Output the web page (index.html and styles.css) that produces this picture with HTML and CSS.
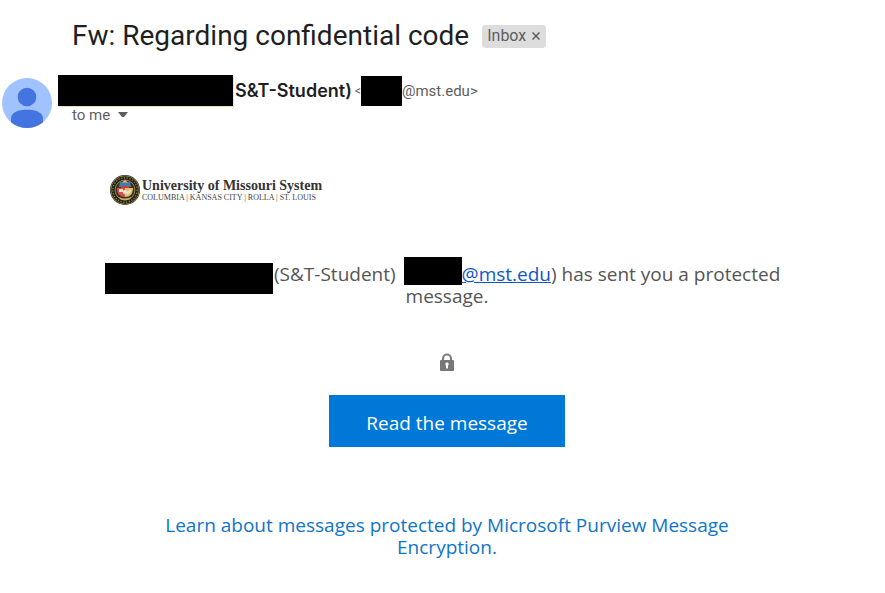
FILE: index.html
```html
<!DOCTYPE html>
<html lang="en">
<head>
    <meta charset="UTF-8">
    <meta name="viewport" content="width=device-width, initial-scale=1.0">
    <title>Fw: Regarding confidential code</title>
    <link rel="stylesheet" href="styles.css">
</head>
<body>
    <header class="subject">
        <h1>Fw: Regarding confidential code</h1>
        <div class="label">
            <span>Inbox</span>
            <button class="label-remove" type="button" aria-label="Remove label Inbox">
                <svg width="8" height="8" viewBox="0 0 8 8"><path d="M0.5 0.5L7.5 7.5M7.5 0.5L0.5 7.5" stroke="#5e5e5e" stroke-width="1.5"/></svg>
            </button>
        </div>
    </header>

    <section class="sender">
        <svg class="avatar" width="50" height="50" viewBox="0 0 50 50">
            <circle cx="25" cy="25" r="25" fill="#a0c3ff"/>
            <circle cx="25" cy="19" r="9.3" fill="#4374e0"/>
            <path d="M9 44.2V41C9 34 16.5 31.8 25 31.8S41 34 41 41V44.2A25 25 0 0 1 9 44.2Z" fill="#4374e0"/>
        </svg>
        <div class="sender-info">
            <div class="from">
                <span class="redacted redacted-name"></span>
                <span class="name">S&amp;T-Student)</span>
                <span class="address bracket">&lt;</span>
                <span class="redacted redacted-user"></span>
                <span class="address">@mst.edu&gt;</span>
            </div>
            <div class="to">
                <span>to me</span>
                <button class="details" type="button" aria-label="Show details">
                    <svg width="10" height="6" viewBox="0 0 10 6"><path d="M0 0H10L6 5H4Z" fill="#5e5e5e"/></svg>
                </button>
            </div>
        </div>
    </section>

    <main class="message">
        <div class="logo">
            <svg class="seal" width="32" height="32" viewBox="0 0 32 32">
                <circle cx="16" cy="16" r="15" fill="#24211b"/>
                <circle cx="16" cy="16" r="14.2" fill="none" stroke="#8b7840" stroke-width="1"/>
                <circle cx="16" cy="16" r="12.2" fill="none" stroke="#9c8a55" stroke-width="1.2" stroke-dasharray="1.2 1.6"/>
                <circle cx="16" cy="16" r="10" fill="#3b3422" stroke="#b39b50" stroke-width="0.8"/>
                <path d="M11 8H21L22 13H10Z" fill="#4a78b0"/>
                <path d="M13 8.5L16 6L19 8.5Z" fill="#d6c27c"/>
                <path d="M12 12H20V14H12Z" fill="#c8452f"/>
                <path d="M8 14H16V23C11 23 8 20 8 14Z" fill="#d8504a"/>
                <path d="M16 14H24C24 20 21 23 16 23Z" fill="#e0c060"/>
                <path d="M10 15H14V18H10ZM18 18L22 15V18L18 21Z" fill="#eee2c0"/>
                <circle cx="16" cy="18" r="2.2" fill="#e8e4dc"/>
                <path d="M10 23Q16 26 22 23L21 25Q16 27.5 11 25Z" fill="#c6b269"/>
            </svg>
            <div class="logo-text">
                <div class="logo-title">University of Missouri System</div>
                <div class="logo-campuses">COLUMBIA | KANSAS CITY | ROLLA | ST. LOUIS</div>
            </div>
        </div>

        <p class="notice">
            <span class="notice-line"><span class="redacted redacted-full"></span><span>(S&amp;T-Student)</span><span class="redacted redacted-mail"></span><span><a href="mailto:@mst.edu">@mst.edu</a>) has sent you a protected</span></span>
            <span class="notice-line notice-end">message.</span>
        </p>

        <svg class="lock" width="16" height="18" viewBox="0 0 16 18">
            <path d="M4 8V5.5A4 4 0 0 1 12 5.5V8" fill="none" stroke="#808080" stroke-width="2.2"/>
            <rect x="1" y="7" width="14" height="11" rx="1" fill="#787878"/>
            <path d="M8 9.5A1.7 1.7 0 0 1 9 12.6V15.5H7V12.6A1.7 1.7 0 0 1 8 9.5Z" fill="#fff"/>
        </svg>

        <button class="read" type="button">Read the message</button>

        <a class="learn" href="#">Learn about messages protected by Microsoft Purview Message Encryption.</a>
    </main>
</body>
</html>
```
FILE: styles.css
```css
body {
    margin: 0;
    background-color: #fff;
    font-family: "Open Sans", "Noto Sans", sans-serif;
}
button {
    border: none;
    background: none;
    padding: 0;
    cursor: pointer;
}
svg {
    display: block;
}
.subject {
    display: flex;
    align-items: center;
    gap: 13px;
    padding: 18px 0 0 72px;
    font-family: Roboto, Inter, sans-serif;
}
h1 {
    margin: 0;
    font-size: 28px;
    line-height: 36px;
    font-weight: 400;
    color: #1f1f1f;
}
.label {
    display: flex;
    align-items: center;
    gap: 6px;
    height: 23px;
    padding: 0 6px 0 5px;
    border-radius: 4px;
    background-color: #ddd;
    color: #5e5e5e;
    font-size: 16px;
    line-height: 22px;
}
.sender {
    display: flex;
    align-items: flex-start;
    gap: 6px;
    padding: 21px 0 0 2px;
    font-family: Roboto, Inter, sans-serif;
}
.avatar {
    margin-top: 3px;
}
.from {
    display: flex;
    align-items: center;
    height: 31px;
}
.redacted {
    flex: none;
    background-color: #000;
}
.redacted-name {
    width: 175px;
    height: 31px;
    margin-right: 2px;
    box-shadow: 1px 1px 0 #f0e2b0;
}
.redacted-user {
    align-self: flex-end;
    width: 41px;
    height: 30px;
}
.redacted-full {
    align-self: flex-start;
    width: 168px;
    height: 31px;
    margin-right: 1px;
}
.redacted-mail {
    align-self: flex-end;
    width: 58px;
    height: 28px;
    margin-left: 8px;
}
.name {
    margin-right: 3px;
    font-family: Inter, Roboto, sans-serif;
    font-size: 18px;
    font-weight: 600;
    color: #1f1f1f;
}
.address {
    font-size: 15px;
    color: #5e5e5e;
}
.bracket {
    font-size: 12px;
}
.to {
    display: flex;
    align-items: center;
    gap: 8px;
    padding-left: 14px;
    font-size: 15px;
    line-height: 18px;
    color: #5e5e5e;
}
.message {
    display: flex;
    flex-direction: column;
    align-items: center;
    padding: 46px 96px 0 105px;
    font-size: 19px;
    line-height: 22px;
    text-align: center;
}
.logo {
    display: flex;
    align-items: center;
    align-self: flex-start;
    gap: 1px;
    padding-left: 4px;
    font-family: "Liberation Serif", serif;
    text-align: left;
    white-space: nowrap;
}
.logo-title {
    font-size: 14px;
    line-height: 15px;
    font-weight: 700;
    color: #333;
}
.logo-campuses {
    font-size: 8px;
    line-height: 10px;
    color: #444;
}
.notice {
    align-self: stretch;
    margin: 57px 0 0;
    color: #555;
}
.notice-line {
    display: flex;
    align-items: center;
    height: 22px;
    white-space: nowrap;
}
.notice-end {
    justify-content: center;
}
.notice a {
    color: #15c;
}
.lock {
    margin-top: 46px;
}
.read {
    margin-top: 24px;
    width: 236px;
    height: 52px;
    padding-top: 4px;
    background-color: #0078d7;
    color: #fff;
    font-family: inherit;
    font-size: 19px;
}
.learn {
    max-width: 600px;
    margin-top: 67px;
    color: #0f75c8;
    text-decoration: none;
}
```
